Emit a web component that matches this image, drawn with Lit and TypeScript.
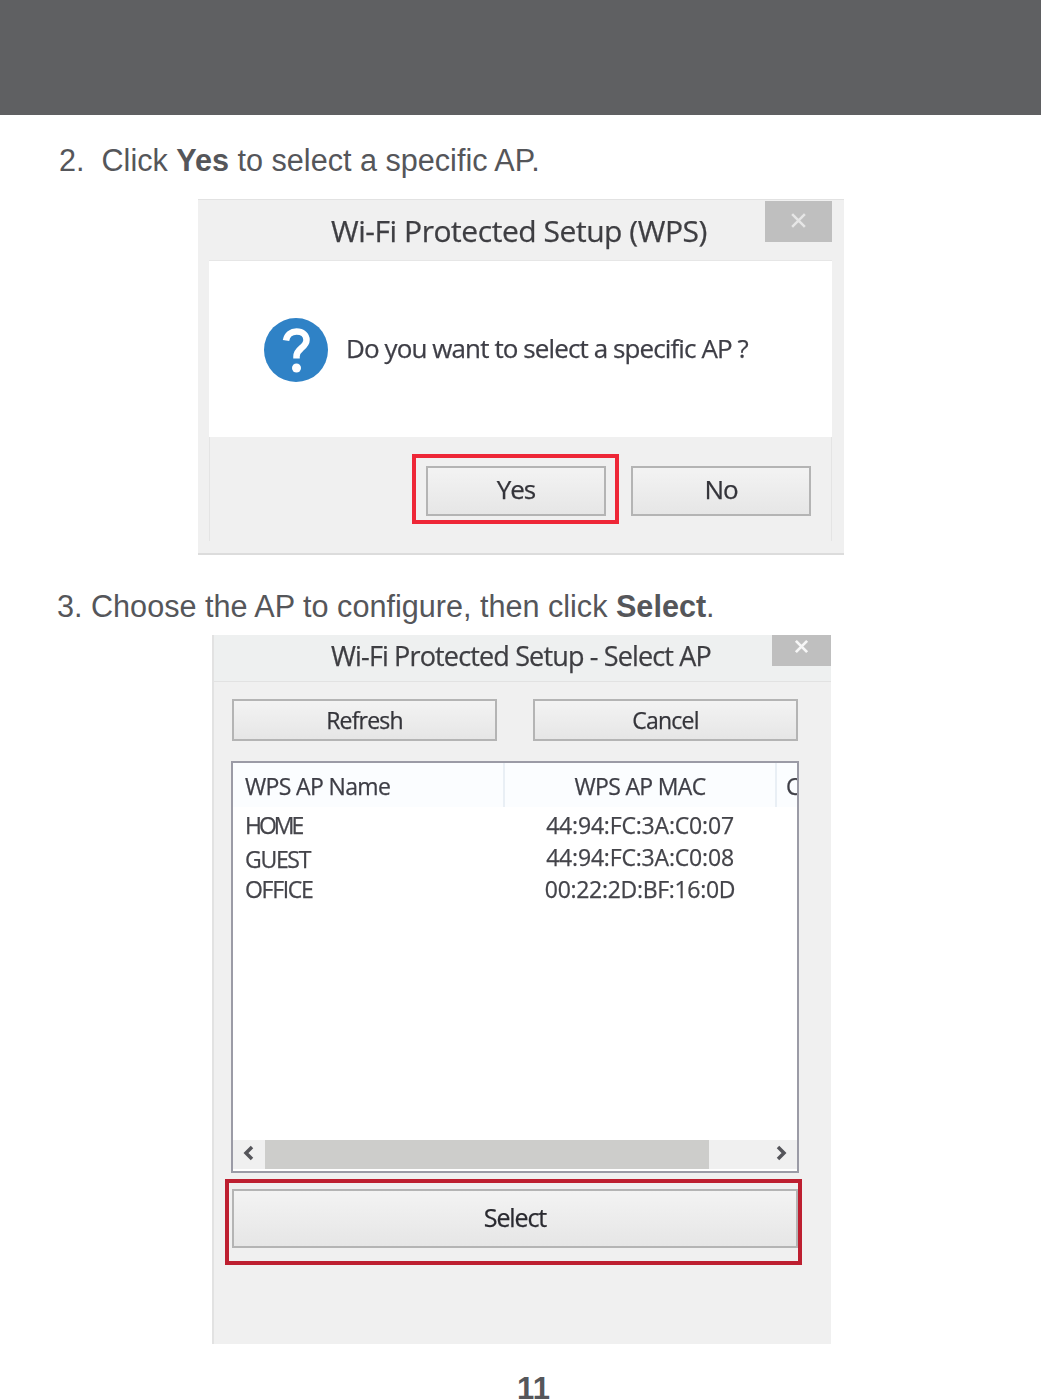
import { LitElement, html, css, svg } from "lit";
import { customElement } from "lit/decorators.js";

const rows = [
  { name: "HOME", mac: "44:94:FC:3A:C0:07", cls: "r1" },
  { name: "GUEST", mac: "44:94:FC:3A:C0:08", cls: "r2" },
  { name: "OFFICE", mac: "00:22:2D:BF:16:0D", cls: "r3" },
];

const questionIcon = svg`
  <circle cx="32" cy="32" r="32" fill="#2f82c6" />
  <path d="M22 22.5c1-6 5.500-9 10.500-9 6 0 10 3.500 10 8.500 0 4-2.500 6-5.500 8.500-2.800 2.300-4.500 4-4.500 8v2"
    fill="none" stroke="#fff" stroke-width="6.500" />
  <circle cx="32.500" cy="50" r="4.500" fill="#fff" />
`;

@customElement("app-root")
export class AppRoot extends LitElement {
  static styles = css`
    :host {
      display: block;
      width: 1041px;
      height: 1399px;
      overflow: hidden;
      background: #fff;
      font-family: "Open Sans", "Noto Sans", sans-serif;
      color: #3c3c40;
    }
    .banner {
      height: 115px;
      background: #5f6062;
    }
    .step {
      font-family: "Liberation Sans", Arial, sans-serif;
      font-size: 30.6px;
      line-height: 36px;
      color: #55565a;
      white-space: pre;
    }
    .step b {
      font-weight: bold;
    }
    .step-two {
      margin: 27px 0 0 59px;
      height: 57px;
    }
    .step-three {
      margin: 33px 0 0 57px;
      height: 47px;
    }
    .dialog {
      background: #f0f0f0;
      filter: blur(0.5px);
      -webkit-text-stroke: 0.25px currentColor;
    }
    .wps {
      margin-left: 198px;
      width: 646px;
      height: 356px;
      border-top: 1px solid #e2e2e2;
      border-bottom: 2px solid #dcdcdc;
      box-sizing: border-box;
      display: flex;
      flex-direction: column;
    }
    .wps-title {
      height: 60px;
      display: flex;
      padding-top: 1px;
      box-sizing: border-box;
    }
    .title-text {
      flex: 1;
      color: #3e3e42;
      white-space: nowrap;
    }
    .wps-title .title-text {
      font-size: 30px;
      line-height: 60px;
      letter-spacing: -0.45px;
      padding-left: 133px;
    }
    .close {
      background: #bfbfbf;
      color: #e6e6e6;
      display: flex;
      align-items: center;
      justify-content: center;
      box-sizing: border-box;
    }
    .wps-title .close {
      width: 67px;
      height: 41px;
      margin-right: 12px;
      padding-bottom: 2px;
    }
    .wps-body {
      margin: 0 12px 0 11px;
      height: 177px;
      background: #fff;
      border-top: 1px solid #e6e6e6;
      box-sizing: border-box;
      display: flex;
      align-items: center;
      padding: 0 0 0 55px;
      gap: 18px;
    }
    .wps-body svg {
      width: 64px;
      height: 64px;
      flex: none;
      margin-top: 1px;
    }
    .question {
      font-size: 26px;
      letter-spacing: -0.9px;
      color: #3e3e46;
      white-space: nowrap;
      margin-top: -3px;
    }
    .wps-foot {
      margin: 0 12px 0 11px;
      height: 104px;
      border-left: 1px solid #e4e4e4;
      border-right: 1px solid #e4e4e4;
      box-sizing: border-box;
      display: flex;
      justify-content: flex-end;
      align-items: flex-start;
      padding: 29px 20px 0 0;
      gap: 25px;
    }
    .btn {
      box-sizing: border-box;
      display: flex;
      align-items: center;
      justify-content: center;
      border: 2px solid #b4b4b4;
      background: linear-gradient(#f3f3f3, #e6e6e6);
      color: #34343a;
      font-size: 26px;
      letter-spacing: -1px;
    }
    .wps-foot .btn {
      width: 180px;
      height: 50px;
      padding-bottom: 4px;
    }
    /* red marker boxes sit on top of the dialog */
    .marked {
      position: relative;
    }
    .marked::after {
      content: "";
      position: absolute;
      box-sizing: border-box;
      border-style: solid;
      border-width: 4px;
    }
    .yes::after {
      left: -14px;
      top: -12px;
      width: 207px;
      height: 70px;
      border-color: #ee2737;
    }
    .choose {
      margin-left: 212px;
      width: 619px;
      height: 709px;
      display: flex;
      flex-direction: column;
      border-left: 2px solid #e2e2e2;
      box-sizing: border-box;
    }
    .choose-title {
      height: 47px;
      display: flex;
      background: #eef0f0;
      border-bottom: 1px solid #e2e2e2;
      box-sizing: border-box;
    }
    .choose-title .title-text {
      font-size: 27px;
      line-height: 41px;
      letter-spacing: -0.85px;
      padding-left: 117px;
    }
    .choose-title .close {
      width: 59px;
      height: 31px;
      padding-bottom: 9px;
      color: #f6f6f6;
    }
    .actions {
      display: flex;
      gap: 36px;
      padding: 17px 0 0 18px;
    }
    .actions .btn {
      width: 265px;
      height: 42px;
      font-size: 23px;
      letter-spacing: -0.8px;
    }
    .list {
      margin: 20px 0 0 17px;
      width: 568px;
      height: 412px;
      box-sizing: border-box;
      border: 2px solid #9b9ba6;
      background: #fff;
      display: flex;
      flex-direction: column;
      overflow: hidden;
    }
    .head {
      height: 44px;
      flex: none;
      display: grid;
      grid-template-columns: 270px 270px 1fr;
      gap: 2px;
      background: #e9eff5;
    }
    .head > div {
      background: #fbfdff;
      font-size: 23px;
      line-height: 46px;
      letter-spacing: -0.65px;
      color: #3e3e46;
      white-space: nowrap;
      overflow: hidden;
    }
    .name {
      padding-left: 12px;
    }
    .head .third {
      padding-left: 9px;
    }
    .mac {
      text-align: center;
    }
    .row {
      display: grid;
      grid-template-columns: 272px 272px;
      font-size: 23px;
      color: #44444a;
      white-space: nowrap;
    }
    .row .name {
      letter-spacing: -1.3px;
    }
    .row .mac {
      padding-right: 2px;
      letter-spacing: -0.18px;
    }
    .r1 {
      height: 34px;
      line-height: 36px;
    }
    .row.r1 .name {
      letter-spacing: -3px;
    }
    .r2 {
      height: 31px;
      line-height: 36px;
    }
    .row.r2 .mac {
      margin-top: -2px;
    }
    .r3 {
      height: 31px;
      line-height: 34px;
    }
    .row.r3 .mac {
      letter-spacing: -0.3px;
    }
    .rows {
      flex: 1;
    }
    .scroll {
      height: 31px;
      flex: none;
      background: #f0f0f0;
      display: flex;
      align-items: center;
      box-sizing: border-box;
      border-bottom: 2px solid #fff;
    }
    .scroll svg {
      width: 32px;
      height: 16px;
      flex: none;
      margin-top: -4px;
    }
    .thumb {
      width: 444px;
      height: 100%;
      background: #cdcdcb;
    }
    .gap {
      flex: 1;
    }
    .select-wrap {
      margin: 16px 0 0 18px;
      width: 566px;
    }
    .select-wrap .btn {
      height: 59px;
      font-size: 25px;
      color: #2a2a30;
      letter-spacing: -1.1px;
      padding-bottom: 3px;
    }
    .select-wrap::after {
      left: -7px;
      top: -10px;
      width: 577px;
      height: 86px;
      border-color: #bd1f30;
    }
    .page {
      margin: 27px 0 0 26px;
      text-align: center;
      font-family: "Liberation Sans", Arial, sans-serif;
      font-size: 31px;
      font-weight: bold;
      line-height: 36px;
      color: #55565a;
    }
  `;

  private closeIcon(size: number, width: number) {
    return html`<svg width=${size} height=${size} viewBox="0 0 16 16">
      <path d="M2 2L14 14M14 2L2 14" stroke="currentColor" stroke-width=${width} fill="none" />
    </svg>`;
  }

  render() {
    return html`
      <div class="banner"></div>
      <div class="step step-two">2.  Click <b>Yes</b> to select a specific AP.</div>
      <div class="dialog wps">
        <div class="wps-title">
          <div class="title-text">Wi-Fi Protected Setup (WPS)</div>
          <div class="close">${this.closeIcon(17, 2.4)}</div>
        </div>
        <div class="wps-body">
          <svg viewBox="0 0 64 64">${questionIcon}</svg>
          <div class="question">Do you want to select a specific AP ?</div>
        </div>
        <div class="wps-foot">
          <div class="marked yes"><div class="btn">Yes</div></div>
          <div class="btn">No</div>
        </div>
      </div>
      <div class="step step-three">3. Choose the AP to configure, then click <b>Select</b>.</div>
      <div class="dialog choose">
        <div class="choose-title">
          <div class="title-text">Wi-Fi Protected Setup - Select AP</div>
          <div class="close">${this.closeIcon(15, 3)}</div>
        </div>
        <div class="actions">
          <div class="btn">Refresh</div>
          <div class="btn">Cancel</div>
        </div>
        <div class="list">
          <div class="head">
            <div class="name">WPS AP Name</div>
            <div class="mac">WPS AP MAC</div>
            <div class="third">C</div>
          </div>
          <div class="rows">
            ${rows.map(
              (r) => html`<div class="row ${r.cls}">
                <div class="name">${r.name}</div>
                <div class="mac">${r.mac}</div>
              </div>`
            )}
          </div>
          <div class="scroll">
            <svg viewBox="0 0 32 16">
              <path d="M19 2L13 8L19 14" fill="none" stroke="#55555a" stroke-width="3.500" />
            </svg>
            <div class="thumb"></div>
            <div class="gap"></div>
            <svg viewBox="0 0 32 16">
              <path d="M13 2L19 8L13 14" fill="none" stroke="#55555a" stroke-width="3.500" />
            </svg>
          </div>
        </div>
        <div class="marked select-wrap"><div class="btn">Select</div></div>
      </div>
      <div class="page">11</div>
    `;
  }
}
